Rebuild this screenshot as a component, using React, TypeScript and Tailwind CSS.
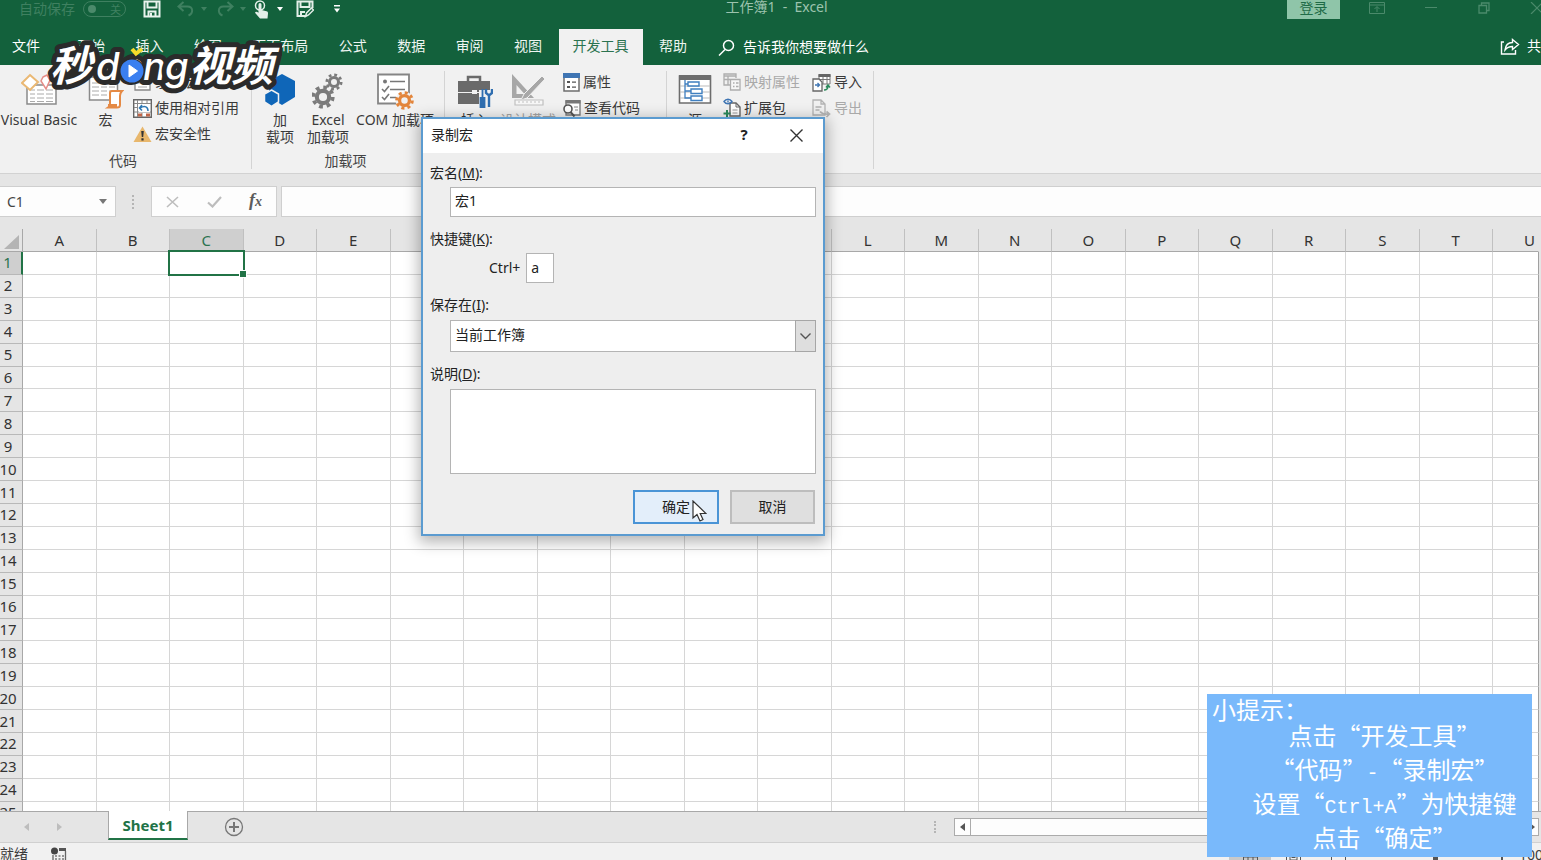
import { ReactNode } from "react";

const TABS = ["开始", "插入", "绘图", "页面布局", "公式", "数据", "审阅", "视图", "开发工具", "帮助"];
const COLUMNS = "ABCDEFGHIJKLMNOPQRSTU".split("");
const ROWS = Array.from({ length: 25 }, (_, i) => i + 1);

function Gear({ cx, cy, r, color }: { cx: number; cy: number; r: number; color: string }) {
  const outer = r * 1.3;
  const tooth = (2 * Math.PI * outer) / 16;
  return (
    <g fill="none" stroke={color}>
      <circle cx={cx} cy={cy} r={r * 0.82} strokeWidth={r * 0.55} />
      <circle cx={cx} cy={cy} r={outer} strokeWidth={r * 0.5} strokeDasharray={`${tooth} ${tooth}`} />
    </g>
  );
}

/* ---------- title bar ---------- */

function Caret({ className }: { className: string }) {
  return (
    <svg className={className} width="6" height="4" viewBox="0 0 6 4" fill="currentColor">
      <path d="M0 0h6L3 4z" />
    </svg>
  );
}

function TitleBar() {
  return (
    <div className="grid h-[29px] grid-cols-[1fr_auto_1fr] items-start overflow-hidden">
      <div className="flex h-[18px] items-center pl-[19px] text-[#3f8060]">
        <span className="text-sm leading-4">自动保存</span>
        <button
          aria-label="自动保存 关"
          className="ml-2 flex h-4 w-[43px] items-center justify-between rounded-full border border-[#3f8060] px-1 text-[11px] leading-none"
        >
          <span className="size-2 rounded-full bg-[#4b8a6b]" />
          <span>关</span>
        </button>
        <button aria-label="保存" className="ml-[17px] text-[#e9f3ed]">
          <svg width="18" height="18" viewBox="0 0 18 18" fill="none" stroke="currentColor" strokeWidth="2">
            <path d="M1.500 1.500h15v15h-15zM4.500 1.500v6h9v-6M5.500 16v-4.500h7V16" />
            <path d="M8 13v3" />
          </svg>
        </button>
        <button aria-label="撤销" className="ml-4">
          <svg width="18" height="16" viewBox="0 0 18 16" fill="none" stroke="currentColor" strokeWidth="2">
            <path d="M6.500 1L1.500 5.500l5 4.500M2 5.500h8.500c6 0 6 7 1 9" />
          </svg>
        </button>
        <Caret className="ml-1.5" />
        <button aria-label="恢复" className="ml-[9px]">
          <svg width="18" height="16" viewBox="0 0 18 16" fill="none" stroke="currentColor" strokeWidth="2">
            <path d="M11.500 1l5 4.500-5 4.500M16 5.500H7.500c-6 0-6 7-1 9" />
          </svg>
        </button>
        <Caret className="ml-1.5" />
        <button aria-label="触摸/鼠标模式" className="ml-2 text-[#e3efe8]">
          <svg width="16" height="19" viewBox="0 0 16 19" fill="none">
            <circle cx="6" cy="5.500" r="4.500" stroke="currentColor" strokeWidth="1.500" />
            <path
              d="M4.500 4.500a1.500 1.500 0 0 1 3 0V10l5 1.300c1.200.4 1.600 1 1.500 2.200l-.5 5H6L1 12.800c.5-1.300 1.800-1.200 3.500 0z"
              fill="currentColor"
            />
          </svg>
        </button>
        <Caret className="ml-[7px] text-white" />
        <button aria-label="另存为" className="ml-[13px] text-[#e3efe8]">
          <svg width="18" height="18" viewBox="0 0 18 18" fill="none" stroke="currentColor" strokeWidth="2">
            <path d="M9 16H1.500V1.500h15V8M4.500 2v5h9V2M5 16v-4h4" />
            <path d="M9.500 16.500l1-3.500 5-5 2 2-5 5z" strokeWidth="1.500" />
          </svg>
        </button>
        <button aria-label="自定义快速访问工具栏" className="ml-[19px] text-white">
          <svg width="8" height="8" viewBox="0 0 8 8" fill="currentColor">
            <path d="M1 0h6v1.500H1zM1 3.500h6L4 7.500z" />
          </svg>
        </button>
      </div>
      <h1 className="whitespace-pre pl-3 text-sm leading-[14px] text-[#9cc3ae]">工作簿1  -  Excel</h1>
      <div className="flex h-[18px] items-start justify-end text-[#4b8a6b]">
        <button className="h-[19px] w-[53px] shrink-0 bg-[#8fc5a9] pb-1 text-sm leading-4 text-[#1f6b47]">登录</button>
        <button aria-label="功能区显示选项" className="ml-[29px] mt-0.5">
          <svg width="16" height="12" viewBox="0 0 16 12" fill="none" stroke="currentColor">
            <path d="M.5.5h15v11H.5zM.5 3h15M8 10V5M5.500 7L8 4.500 10.500 7" />
          </svg>
        </button>
        <button aria-label="最小化" className="ml-10 mt-[7px] h-px w-3 bg-[#4b8a6b]" />
        <button aria-label="还原" className="ml-[41px] mt-0.5">
          <svg width="12" height="12" viewBox="0 0 12 12" fill="none" stroke="currentColor" strokeWidth="1.300">
            <path d="M1 3.500h7.500V11H1zM3.500 3.500V1H11v7.500H8.500" />
          </svg>
        </button>
        <button aria-label="关闭" className="ml-10 mt-0.5 w-[11px] overflow-hidden">
          <svg width="13" height="12" viewBox="0 0 13 12" stroke="currentColor" strokeWidth="1.200">
            <path d="M1 0l12 12M13 0L1 12" />
          </svg>
        </button>
      </div>
    </div>
  );
}

function TabBar() {
  return (
    <div className="flex h-9 items-stretch overflow-hidden text-sm text-white">
      <button className="px-3 pb-0.5">文件</button>
      <nav className="ml-[11px] flex w-[638px] shrink-0 justify-between">
        {TABS.map((t) => (
          <button
            key={t}
            className={`px-[14px] pb-0.5 ${t === "开发工具" ? "bg-[#f1f1f1] text-[#2b7350]" : "text-[#eef5f1]"}`}
          >
            {t}
          </button>
        ))}
      </nav>
      <button className="ml-[17px] flex shrink-0 items-center gap-2">
        <svg width="17" height="17" viewBox="0 0 17 17" fill="none" stroke="currentColor" strokeWidth="1.500">
          <circle cx="10.500" cy="6.500" r="5" />
          <path d="M7 10.500L1 16.500" />
        </svg>
        告诉我你想要做什么
      </button>
      <button className="ml-auto flex w-[41px] shrink-0 items-center gap-[7px] whitespace-nowrap pb-0.5">
        <svg className="shrink-0" width="20" height="17" viewBox="0 0 20 17" fill="none" stroke="currentColor" strokeWidth="1.400">
          <path d="M4 4H1.500v12h14v-4" />
          <path d="M12.500 1.500l6 5-6 5V8.500C9 8.500 7 9.500 5 12c.5-4.500 3-7.500 7.500-7.500z" />
        </svg>
        共享
      </button>
    </div>
  );
}

/* ---------- ribbon ---------- */

function BigButton({ icon, className, children, disabled }: { icon: ReactNode; className: string; children: ReactNode; disabled?: boolean }) {
  return (
    <button
      disabled={disabled}
      className={`flex shrink-0 flex-col items-center whitespace-nowrap pt-1 leading-[17px] ${className} ${disabled ? "text-[#a5a5a5]" : ""}`}
    >
      <span className="flex h-[38px] items-start justify-center">{icon}</span>
      <span className="flex flex-col items-center">{children}</span>
    </button>
  );
}

function SmallButton({ icon, children, disabled }: { icon: ReactNode; children: ReactNode; disabled?: boolean }) {
  return (
    <button
      disabled={disabled}
      className={`flex h-[26px] items-center gap-[3px] whitespace-nowrap ${disabled ? "text-[#a9a9a9]" : ""}`}
    >
      {icon}
      {children}
    </button>
  );
}

function Group({ label, className, children }: { label?: string; className: string; children: ReactNode }) {
  return (
    <section className={`relative flex shrink-0 flex-col pt-1 ${className}`}>
      <div className="flex h-20">{children}</div>
      <div className="h-6 pr-1.5 text-center leading-6 text-[#444]">{label}</div>
      <span className="absolute bottom-1 right-0 top-1.5 w-px bg-[#d4d4d4]" />
    </section>
  );
}

const iconVisualBasic = (
  <svg width="36" height="34" viewBox="0 0 36 34" fill="none">
    <path d="M6 12h29v19H6z" fill="#fff" stroke="#8a8a8a" strokeWidth="1.500" />
    <path d="M9 17h5m2 0h7m2 0h7M9 21h5m2 0h7m2 0h7M9 25h5m2 0h7m2 0h7M9 28.500h5m2 0h7m2 0h7" stroke="#aaa" />
    <path d="M9 2l8 7-8 8-8-7z" fill="#fff" stroke="#eab873" strokeWidth="2" />
    <path d="M22 4l4-2 3 5-4 9-5-8z" fill="#fff" stroke="#e58d88" strokeWidth="1.500" />
  </svg>
);

const iconMacro = (
  <svg width="36" height="36" viewBox="0 0 36 36" fill="none">
    <path d="M1.500 4h28v23h-28z" fill="#fff" stroke="#8a8a8a" strokeWidth="1.500" />
    <path d="M4 10h7m2 0h6m2 0h6M4 14h7m2 0h6m2 0h6M4 18h7m2 0h6m2 0h3M4 22h7m2 0h6" stroke="#aaa" />
    <path d="M24 18h10c-2 2-2 3-2 5v9c0 2-2 2.500-3 2.500H20c1.500-1 2-2 2-4V20c0-1 1-2 2-2z" fill="#fff" stroke="#e58a45" strokeWidth="2" />
    <path d="M20 31h9v3h-9z" fill="#e58a45" />
  </svg>
);

const iconRelative = (
  <svg width="19" height="19" viewBox="0 0 19 19" fill="none">
    <path d="M.7.700h17.600v17.600H.7z" fill="#fff" stroke="#666" strokeWidth="1.400" />
    <path d="M1 4.500h17M1 8.500h4M1 13h17M4.500 1v17M9 1v3M14 1v3M9 14v4" stroke="#888" />
    <path d="M6 6h11v7H6z" fill="#fff" />
    <path d="M9 6L6.500 9 9 11.500M7 9c5-3 8-1 8 3" stroke="#3079b5" strokeWidth="1.600" />
    <path d="M5 14.500h4v3H5zM13 14.500h4v3h-4z" fill="#c0674a" />
  </svg>
);

const iconWarning = (
  <svg width="19" height="17" viewBox="0 0 19 17">
    <path d="M9.500.5L18.500 16H.5z" fill="#e8b76c" />
    <path d="M8.200 5h2.600l-.6 6H8.800zM8.400 12.200h2.200v2.200H8.400z" fill="#333" />
  </svg>
);

const iconRecord = (
  <svg width="19" height="19" viewBox="0 0 19 19" fill="none">
    <path d="M2 5h15v12H2z" fill="#fff" stroke="#888" strokeWidth="1.300" />
    <path d="M5 10h9M5 14h9" stroke="#aaa" />
    <circle cx="5" cy="5" r="4" fill="#d9534f" />
  </svg>
);

const iconAddins = (
  <svg width="32" height="34" viewBox="0 0 32 34" fill="#0f66b8">
    <path d="M18 1l13 7v16l-13 8-13-8V8z" />
    <path d="M7.500 17l7 4v8l-7 4.500-7-4.500v-8z" stroke="#f1f1f1" strokeWidth="1.500" />
  </svg>
);

const iconExcelAddins = (
  <svg width="32" height="36" viewBox="0 0 32 36">
    <Gear cx={22} cy={9} r={5.5} color="#7b7b7b" />
    <Gear cx={11} cy={24} r={7.5} color="#7b7b7b" />
  </svg>
);

const iconComAddins = (
  <svg width="38" height="37" viewBox="0 0 38 37" fill="none">
    <path d="M2 1.500h31v29H2z" fill="#fff" stroke="#858585" strokeWidth="1.800" />
    <path d="M14 8.500h15M14 16.500h15M14 24.500h6" stroke="#777" strokeWidth="1.600" />
    <path d="M6 16l2.500 2.500L13 13M6 24l2.500 2.500L13 21" stroke="#777" strokeWidth="1.600" />
    <circle cx="9" cy="8.500" r="2" fill="#777" />
    <circle cx="28.500" cy="27.500" r="9" fill="#f1f1f1" />
    <Gear cx={28.5} cy={27.5} r={6} color="#e3853b" />
  </svg>
);

const iconInsert = (
  <svg width="36" height="36" viewBox="0 0 36 36" fill="none">
    <path d="M11 8V4h12v4" stroke="#6a6a6a" strokeWidth="2.500" />
    <path d="M1 8h32v11H1zM1 20h32v11H1z" fill="#6a6a6a" />
    <path d="M15 17h5v4h-5z" fill="#f1f1f1" />
    <path d="M22 17h14v19H22z" fill="#f1f1f1" />
    <path d="M25.500 16v9M23.500 25h4v9h-4z" stroke="#2f6eb0" strokeWidth="1.800" fill="#2f6eb0" />
    <path d="M29 16v4l3 2.500 3-2.500v-4M32 22v12" stroke="#2f6eb0" strokeWidth="2.400" />
  </svg>
);

const iconDesign = (
  <svg width="36" height="34" viewBox="0 0 36 34" fill="none">
    <path d="M2 1v24h22zM6.500 12v9h8z" fill="#a7a7a7" fillRule="evenodd" />
    <path d="M32 3L14 21l-3 6 6-2L35 6z" fill="#a7a7a7" stroke="#f1f1f1" />
    <path d="M5 27h28v5H5z" fill="#f7f7f7" stroke="#c0c0c0" strokeWidth="1.200" />
    <path d="M9 28v2m4-2v2m4-2v2m4-2v2m4-2v2m4-2v2" stroke="#c0c0c0" />
  </svg>
);

const iconProperties = (
  <svg width="17" height="19" viewBox="0 0 17 19" fill="none">
    <path d="M1 1h15v17H1z" fill="#fff" stroke="#6e6e6e" strokeWidth="1.500" />
    <path d="M0 0h17v5H0z" fill="#3f75b3" />
    <path d="M4 8h3v2H4zM4 13h3v2H4zM9 8.500h4v1.200H9zM9 13.500h4v1.200H9z" fill="#555" />
  </svg>
);

const iconViewCode = (
  <svg width="18" height="18" viewBox="0 0 18 18" fill="none">
    <path d="M3 2h14v14H3z" fill="#fff" stroke="#777" strokeWidth="1.300" />
    <path d="M2.500 1h15v3.500h-15z" fill="#777" />
    <path d="M11 8h4M12 11h3" stroke="#888" />
    <circle cx="5" cy="10" r="4" fill="#fff" stroke="#555" strokeWidth="1.600" />
    <path d="M7.500 13l4 4.500" stroke="#555" strokeWidth="2" />
  </svg>
);

const iconSource = (
  <svg width="34" height="32" viewBox="0 0 34 32" fill="none">
    <path d="M1.500 3h31v27h-31z" fill="#fff" stroke="#6d6d6d" strokeWidth="1.600" />
    <path d="M1 2h32v5H1z" fill="#6d6d6d" />
    <path d="M2 13h30M2 19h30M2 25h30" stroke="#bbb" />
    <path d="M7 7v18h6M7 11h4M7 18h6" stroke="#3f7fc0" strokeWidth="1.300" />
    <path d="M10 9h11v4H10zM13 16h11v4.500H13zM13 23h11v4.500H13z" fill="#fff" stroke="#3f7fc0" strokeWidth="1.400" />
  </svg>
);

const iconMapProps = (
  <svg width="18" height="18" viewBox="0 0 18 18" fill="none" stroke="#adadad" strokeWidth="1.300">
    <path d="M7 12H1V1h12v4M1 3h12M1 6.500h6M5 3v9" />
    <path d="M7.500 6.500H17V17H7.500z" fill="#f6f6f6" />
    <path d="M10 10h1.500M13 10h2.500M10 13.500h1.500M13 13.500h2.500" />
  </svg>
);

const iconExpansion = (
  <svg width="18" height="20" viewBox="0 0 18 20" fill="none">
    <path d="M7 5h6l4 4v9H7z" fill="#fff" stroke="#666" strokeWidth="1.400" />
    <path d="M13 5v4h4" stroke="#666" />
    <path d="M9.500 12h5M9.500 15h5" stroke="#999" />
    <path d="M1 3.500c2-3 6-3 8 0-2 3-6 3-8 0zM5 2.500v2" stroke="#3f75b3" strokeWidth="1.400" />
    <path d="M4 12v7M.5 15.500h7" stroke="#2c8a5c" strokeWidth="2" />
  </svg>
);

const iconImport = (
  <svg width="19" height="19" viewBox="0 0 19 19" fill="none">
    <path d="M7 1.500h11V11H7zM7 6.500h11M11 3v8M15 3v8" fill="#fff" stroke="#777" />
    <path d="M6.500 1h12v3h-12z" fill="#666" />
    <path d="M1 6h6l3 3v9H1z" fill="#fff" stroke="#666" strokeWidth="1.300" />
    <path d="M3 12h4M5.500 10l2 2-2 2" stroke="#3f75b3" strokeWidth="1.300" />
    <path d="M12 17c3 0 4-1 4-4M14 14.500l2-2.500 2 2.500" stroke="#2c8a5c" strokeWidth="1.500" />
  </svg>
);

const iconExport = (
  <svg width="19" height="19" viewBox="0 0 19 19" fill="none" stroke="#b3b3b3" strokeWidth="1.300">
    <path d="M1 1h8l4 4v11H1zM9 1v4h4M3.500 8h6M3.500 11h4" />
    <path d="M8 12.500c2 2.500 4 3 9 2.500M14.500 12.500L17.500 15l-3 3" strokeWidth="1.700" />
  </svg>
);

function Ribbon() {
  return (
    <div className="flex h-[109px] shrink-0 overflow-hidden border-b border-[#d2d2d2] bg-[#f1f1f1] text-sm text-[#3a3a3a]">
      <Group label="代码" className="w-[252px]">
        <BigButton icon={iconVisualBasic} className="w-[78px]">Visual Basic</BigButton>
        <BigButton icon={iconMacro} className="ml-2 w-[39px]">宏</BigButton>
        <div className="ml-2">
          <SmallButton icon={iconRecord}>录制宏</SmallButton>
          <SmallButton icon={iconRelative}>使用相对引用</SmallButton>
          <SmallButton icon={iconWarning}>宏安全性</SmallButton>
        </div>
      </Group>
      <Group label="加载项" className="w-[193px]">
        <BigButton icon={iconAddins} className="ml-2 w-10">
          <span>加</span>
          <span>载项</span>
        </BigButton>
        <BigButton icon={iconExcelAddins} className="ml-1 w-12">
          <span>Excel</span>
          <span>加载项</span>
        </BigButton>
        <BigButton icon={iconComAddins} className="ml-0.5 w-[82px]">COM 加载项</BigButton>
      </Group>
      <Group className="w-[222px]">
        <BigButton icon={iconInsert} className="ml-2.5 w-10">插入</BigButton>
        <BigButton icon={iconDesign} className="ml-1 w-[58px]" disabled>设计模式</BigButton>
        <div className="ml-1.5">
          <SmallButton icon={iconProperties}>属性</SmallButton>
          <SmallButton icon={iconViewCode}>查看代码</SmallButton>
        </div>
      </Group>
      <Group className="w-[207px]">
        <BigButton icon={iconSource} className="ml-2 w-10">源</BigButton>
        <div className="ml-2">
          <SmallButton icon={iconMapProps} disabled>映射属性</SmallButton>
          <SmallButton icon={iconExpansion}>扩展包</SmallButton>
        </div>
        <div className="ml-3">
          <SmallButton icon={iconImport}>导入</SmallButton>
          <SmallButton icon={iconExport} disabled>导出</SmallButton>
        </div>
      </Group>
    </div>
  );
}

/* ---------- formula bar and grid ---------- */

function FormulaBar() {
  return (
    <div className="flex h-[55px] shrink-0 items-start bg-[#e5e5e5] pt-3">
      <div className="flex h-[31px] w-[116px] shrink-0 items-center border border-l-0 border-[#cfcfcf] bg-[#fdfdfd]">
        <input aria-label="名称框" defaultValue="C1" className="w-[99px] bg-transparent pl-[7px] text-sm text-[#444] outline-none" />
        <svg width="8" height="5" viewBox="0 0 8 5" fill="#777">
          <path d="M0 0h8L4 5z" />
        </svg>
      </div>
      <span className="ml-4 mt-[9px] h-3.5 w-0 border-l-2 border-dotted border-[#b5b5b5]" />
      <div className="ml-[17px] flex h-[31px] w-[126px] shrink-0 items-center justify-between border border-[#cfcfcf] bg-[#fdfdfd] pl-3.5 pr-3.5">
        <button aria-label="取消输入">
          <svg width="13" height="12" viewBox="0 0 13 12" stroke="#bdbdbd" strokeWidth="1.600">
            <path d="M1 1l11 10M12 1L1 11" />
          </svg>
        </button>
        <button aria-label="输入">
          <svg width="15" height="12" viewBox="0 0 15 12" fill="none" stroke="#bdbdbd" strokeWidth="2.200">
            <path d="M1 6.500l4.500 4L14 1" />
          </svg>
        </button>
        <button aria-label="插入函数" className="font-['Liberation_Serif',serif] text-lg font-bold italic leading-none text-[#5c5c5c]">
          f<span className="text-sm">x</span>
        </button>
      </div>
      <input aria-label="编辑栏" className="ml-1 h-[31px] min-w-0 flex-1 border border-r-0 border-[#cfcfcf] bg-[#fdfdfd] px-2 text-sm outline-none" />
    </div>
  );
}

function Sheet() {
  return (
    <div className="min-h-0 flex-1 overflow-hidden bg-[#e5e5e5] pr-0.5">
      <table className="h-[calc(100%+14px)] w-full table-fixed border-separate border-spacing-0 text-[15px] leading-none text-[#333]">
        <colgroup>
          <col className="w-[23px]" />
          {COLUMNS.map((c) => (
            <col key={c} className={c === "U" ? "w-[46px]" : ""} />
          ))}
        </colgroup>
        <thead>
          <tr className="h-[23px]">
            <th className="border-b border-r border-[#a8a8a8] p-0">
              <svg className="ml-1 mt-1" width="15" height="14" viewBox="0 0 15 14" fill="#b4b4b4">
                <path d="M15 0v14H0z" />
              </svg>
            </th>
            {COLUMNS.map((c) => (
              <th
                key={c}
                className={`border-b border-r border-b-[#a8a8a8] p-0 font-normal ${
                  c === "C" ? "bg-[#cfcfcf] text-[#2b7350]" : ""
                } ${c === "U" ? "border-r-transparent pl-7" : "border-r-[#c0c0c0]"}`}
              >
                {c}
              </th>
            ))}
          </tr>
        </thead>
        <tbody>
          {ROWS.map((r) => (
            <tr key={r}>
              <th
                className={`border-b border-r border-b-[#b8b8b8] p-0 font-normal ${
                  r === 1 ? "border-r-2 border-r-[#217346] bg-[#cfcfcf] text-[#2b7350]" : "border-r-[#a8a8a8]"
                }`}
              >
                <div className="flex justify-center pr-1.5">{r}</div>
              </th>
              {COLUMNS.map((c) => (
                <td
                  key={c}
                  className={`relative border-b border-r border-b-[#d6d6d6] bg-white p-0 ${
                    c === "U" ? "border-r-[#a0a0a0]" : "border-r-[#d6d6d6]"
                  }`}
                >
                  {c === "C" && r === 1 && (
                    <div className="absolute -inset-[2px] z-10 border-2 border-[#217346]">
                      <span className="absolute -bottom-[3px] -right-[3px] size-1.5 bg-[#217346] outline outline-white" />
                    </div>
                  )}
                </td>
              ))}
            </tr>
          ))}
        </tbody>
      </table>
    </div>
  );
}

function SheetTabs() {
  return (
    <div className="flex h-[31px] shrink-0 items-start border-t border-[#a8a8a8] bg-[#e5e5e5]">
      <div className="flex h-[30px] w-[108px] shrink-0 items-center gap-7 pl-6 text-[#bdbdbd]">
        <button aria-label="上一个工作表">
          <svg width="5" height="8" viewBox="0 0 5 8" fill="currentColor">
            <path d="M5 0v8L0 4z" />
          </svg>
        </button>
        <button aria-label="下一个工作表">
          <svg width="5" height="8" viewBox="0 0 5 8" fill="currentColor">
            <path d="M0 0v8l5-4z" />
          </svg>
        </button>
      </div>
      <button className="-mt-px h-[29px] w-20 shrink-0 border-x border-b-2 border-x-[#a8a8a8] border-b-[#217346] bg-white text-[15px] font-bold leading-6 text-[#217346]">
        Sheet1
      </button>
      <button aria-label="新工作表" className="ml-9 mt-[5px]">
        <svg width="20" height="20" viewBox="0 0 20 20" fill="none" stroke="#777">
          <circle cx="10" cy="10" r="8.500" strokeWidth="1.300" />
          <path d="M10 5v10M5 10h10" strokeWidth="2" />
        </svg>
      </button>
      <div className="ml-auto flex h-[30px] w-[607px] shrink-0 items-center pr-0.5">
        <span className="h-3 w-0 border-l-2 border-dotted border-[#b5b5b5]" />
        <div className="ml-[18px] flex h-[18px] min-w-0 flex-1 border border-[#ababab] bg-[#fdfdfd]">
          <button aria-label="向左滚动" className="flex w-4 items-center justify-center border-r border-[#ababab]">
            <svg width="5" height="8" viewBox="0 0 5 8" fill="#555">
              <path d="M5 0v8L0 4z" />
            </svg>
          </button>
          <button aria-label="向右滚动" className="ml-auto flex w-3 items-center justify-center">
            <svg width="5" height="8" viewBox="0 0 5 8" fill="#555">
              <path d="M0 0v8l5-4z" />
            </svg>
          </button>
        </div>
      </div>
    </div>
  );
}

function StatusBar() {
  return (
    <div className="flex h-[18px] shrink-0 items-start overflow-hidden border-t border-[#d0d0d0] bg-[#f1f1f1] text-sm text-[#3a3a3a]">
      <span className="leading-[22px]">就绪</span>
      <svg className="ml-[23px] mt-1" width="16" height="16" viewBox="0 0 16 16" fill="none">
        <circle cx="3.500" cy="4" r="3.500" fill="#444" />
        <path d="M8 1h7v3H8z" fill="#555" />
        <path d="M2 8v8h12.500V4" stroke="#666" strokeWidth="1.300" />
        <path d="M4 9h2m1.500 0h2M11 9h2M4 12h2m1.500 0h2m1.500 0h2" stroke="#777" strokeWidth="1.500" />
      </svg>
      <div className="ml-auto flex h-6 items-center">
        <button aria-label="普通" className="flex h-6 w-[42px] items-center justify-center bg-[#c9c9c9]">
          <svg width="15" height="12" viewBox="0 0 15 12" fill="none" stroke="#555">
            <path d="M.5.5h14v11H.5zM.5 4h14M.5 8h14M5 0v12M10 0v12" />
          </svg>
        </button>
        <button aria-label="页面布局" className="ml-[15px]">
          <svg width="15" height="12" viewBox="0 0 15 12" fill="none" stroke="#555">
            <path d="M.5.5h14v11H.5zM4 3h7v8H4zM5.500 6h4M5.500 8.500h4" />
          </svg>
        </button>
        <button aria-label="分页预览" className="ml-[30px]">
          <svg width="15" height="12" viewBox="0 0 15 12" fill="none" stroke="#555">
            <path d="M.5 0v12M14.500 0v12M5 0v6h5V0" />
          </svg>
        </button>
        <input
          aria-label="缩放"
          type="range"
          className="ml-[38px] h-px w-[102px] appearance-none bg-[#999] [&::-webkit-slider-thumb]:h-3 [&::-webkit-slider-thumb]:w-[5px] [&::-webkit-slider-thumb]:appearance-none [&::-webkit-slider-thumb]:bg-[#555]"
        />
        <button aria-label="放大" className="ml-[11px]">
          <svg width="10" height="10" viewBox="0 0 10 10" stroke="#555" strokeWidth="2">
            <path d="M5 0v10M0 5h10" />
          </svg>
        </button>
        <span className="ml-3 w-[22px] overflow-hidden whitespace-nowrap">100%</span>
      </div>
    </div>
  );
}

/* ---------- floating parts ---------- */

const labelClass = "block leading-5";
const fieldClass = "ml-5 w-[366px] border border-[#b4b4b4] bg-white px-1 outline-none";

function RecordMacroDialog() {
  return (
    <div
      role="dialog"
      aria-label="录制宏"
      className="absolute left-[421px] top-[117px] z-20 w-[404px] border-2 border-[#5b9bd0] bg-[#eee] text-sm text-[#222] shadow-[0_4px_14px_2px_rgba(0,0,0,0.3)]"
    >
      <div className="flex h-[34px] items-center bg-white pb-0.5 pl-2">
        <span className="flex-1">录制宏</span>
        <button aria-label="帮助" className="w-3 text-[15px] font-bold">?</button>
        <button aria-label="关闭" className="ml-10 mr-5">
          <svg width="13" height="13" viewBox="0 0 13 13" stroke="#333" strokeWidth="1.400">
            <path d="M.5.500l12 12M12.500.5l-12 12" />
          </svg>
        </button>
      </div>
      <form className="px-[7px] pb-2.5 pt-2.5" onSubmit={(e) => e.preventDefault()}>
        <label htmlFor="macro-name" className={labelClass}>
          宏名(<u>M</u>):
        </label>
        <input id="macro-name" defaultValue="宏1" className={`mt-1 h-[30px] pb-1 ${fieldClass}`} />
        <label htmlFor="macro-key" className={`mt-3 ${labelClass}`}>
          快捷键(<u>K</u>):
        </label>
        <div className="ml-[59px] mt-1 flex items-center gap-1.5">
          <span>Ctrl+</span>
          <input id="macro-key" defaultValue="a" className="h-[30px] w-7 border border-[#b4b4b4] bg-white px-1 pb-0.5 outline-none" />
        </div>
        <label htmlFor="macro-store" className={`mt-3 ${labelClass}`}>
          保存在(<u>I</u>):
        </label>
        <div className="relative mt-[5px]">
          <select id="macro-store" className={`block h-8 appearance-none pb-0.5 ${fieldClass}`}>
            <option>当前工作簿</option>
          </select>
          <span className="pointer-events-none absolute left-[365px] top-0 flex h-8 w-[21px] items-center justify-center border border-[#a6a6a6] bg-[#dedede]">
            <svg width="11" height="7" viewBox="0 0 11 7" fill="none" stroke="#555" strokeWidth="1.400">
              <path d="M.5.5l5 5 5-5" />
            </svg>
          </span>
        </div>
        <label htmlFor="macro-note" className={`mt-3 ${labelClass}`}>
          说明(<u>D</u>):
        </label>
        <textarea id="macro-note" className={`mt-[5px] block h-[85px] resize-none ${fieldClass}`} />
        <div className="mt-4 flex justify-end gap-[11px] pr-px">
          <button type="submit" className="relative h-[34px] w-[86px] border-2 border-[#4a94d6] bg-[#e3eefa]">
            确定
            <svg className="absolute left-[57px] top-2 z-10" width="15" height="23" viewBox="0 0 15 23">
              <path d="M1 1v17l4-3.500L8 21l3-1.500-2.800-6H14z" fill="#fff" stroke="#333" strokeWidth="1.200" />
            </svg>
          </button>
          <button type="button" className="h-[34px] w-[85px] border-2 border-[#bdbdbd] bg-[#dfdfdf]">
            取消
          </button>
        </div>
      </form>
    </div>
  );
}

function Watermark() {
  return (
    <svg
      className="pointer-events-none absolute left-[46px] top-[38px] z-10 font-['Noto_Sans_CJK_SC',sans-serif] font-bold italic"
      width="236"
      height="62"
      viewBox="0 0 236 62"
    >
      <g fill="#fff" stroke="#2b2b2b" strokeWidth="10" strokeLinejoin="round" paintOrder="stroke">
        <text x="4" y="43" fontSize="42">秒</text>
        <text y="42" fontSize="38" className="font-['Inter',sans-serif] font-medium">
          <tspan x="50">d</tspan>
          <tspan x="75">o</tspan>
          <tspan x="97">n</tspan>
          <tspan x="119">g</tspan>
        </text>
        <text x="143" y="43" fontSize="42">视频</text>
      </g>
      <circle cx="86" cy="33" r="12.500" fill="#2b2b2b" />
      <circle cx="86" cy="33" r="11.500" fill="#3a7ff0" />
      <path d="M83 27l8.500 6-8.500 6z" fill="#fff" stroke="#fff" strokeLinejoin="round" />
      <path d="M86 11l4 4.500 6-4.500" fill="none" stroke="#f6dc2a" strokeWidth="4" />
    </svg>
  );
}

function TipBox() {
  return (
    <aside className="absolute bottom-[3px] right-[9px] z-20 w-[325px] bg-[#79b9fb] pb-[3px] pl-[5px] font-['Noto_Sans_CJK_SC',sans-serif] text-2xl text-white">
      <p className="h-6 leading-[30px]">小提示：</p>
      <div className="whitespace-nowrap pl-[25px] text-center leading-[34px]">
        <p>点击“开发工具”</p>
        <p className="h-[34px]">
          “代码”<span className="font-['Liberation_Mono',monospace] text-xl leading-none">-</span>“录制宏”
        </p>
        <p className="h-[34px]">
          设置“<span className="font-['Liberation_Mono',monospace] text-xl leading-none">Ctrl+A</span>”为快捷键
        </p>
        <p>点击“确定”</p>
      </div>
    </aside>
  );
}

export default function App() {
  return (
    <div
      lang="zh-CN"
      className="relative flex h-screen flex-col overflow-hidden bg-[#e5e5e5] font-['Noto_Sans','Noto_Sans_CJK_SC',sans-serif]"
    >
      <header className="shrink-0 bg-[#13613c]">
        <TitleBar />
        <TabBar />
      </header>
      <Ribbon />
      <FormulaBar />
      <Sheet />
      <SheetTabs />
      <StatusBar />
      <Watermark />
      <RecordMacroDialog />
      <TipBox />
    </div>
  );
}
